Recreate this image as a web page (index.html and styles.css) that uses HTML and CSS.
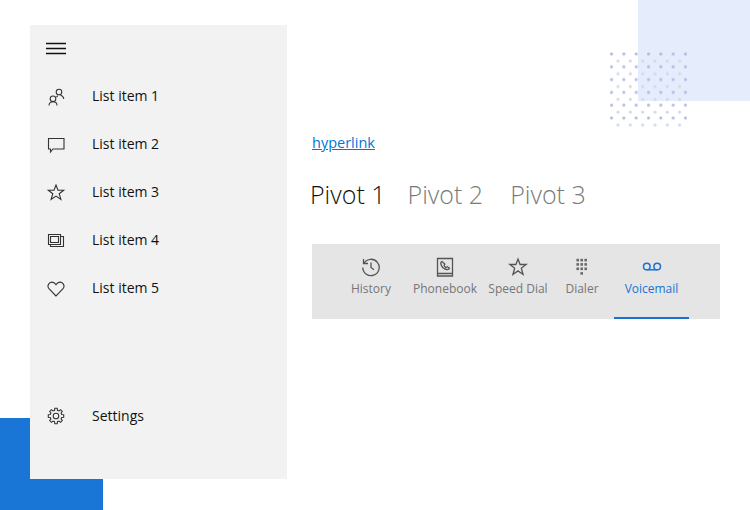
FILE: index.html
```html
<!DOCTYPE html>
<html>
<head>
    <meta charset="utf-8">
    <title>Navigation</title>
    <link rel="stylesheet" href="styles.css">
</head>
<body>
<div class="page">
    <!-- background decoration -->
    <div class="deco-blue"></div>
    <div class="deco-light"></div>
    <div class="deco-dots"></div>

    <div class="sidebar">
        <div class="menu-row">
            <svg class="icon" viewBox="0 0 20 20"><path d="M0 4.500h20M0 9.500h20M0 14.500h20"/></svg>
        </div>
        <div class="nav-row">
            <svg class="icon" viewBox="0 0 20 20">
                <circle cx="13" cy="6" r="2.800"/><circle cx="7" cy="12.800" r="2.800"/>
                <path d="M3 19.500c0-2.500 1.800-3.800 4-3.800s4 1.300 4 3.800M11.800 9.800c-.5.300-1 .8-1.300 1.400M14.500 9.200c1.500.4 3 1.800 3.300 3.600"/>
            </svg>
            <span>List item 1</span>
        </div>
        <div class="nav-row">
            <svg class="icon" viewBox="0 0 20 20"><path d="M2.500 4.500h15.500v10.500h-11l-2.500 3v-3h-2z"/></svg>
            <span>List item 2</span>
        </div>
        <div class="nav-row">
            <svg class="icon" viewBox="0 0 20 20"><path d="M10 3l2 5.200h5.700l-4.500 3.500 1.700 5.800-4.900-3.400-4.900 3.400 1.700-5.800-4.500-3.500h5.700z"/></svg>
            <span>List item 3</span>
        </div>
        <div class="nav-row">
            <svg class="icon" viewBox="0 0 20 20"><path d="M2.500 4.500h12v10h-12zM4.500 6.500h8v6h-8zM15 6.500h2.500v10h-13v-2"/></svg>
            <span>List item 4</span>
        </div>
        <div class="nav-row">
            <svg class="icon" viewBox="0 0 20 20"><path d="M10 18l-6.800-7c-3.200-3.700 1-8.500 4.800-6.200.8.500 1.500 1.200 2 2 .5-.8 1.200-1.500 2-2 3.800-2.300 8 2.500 4.800 6.200z"/></svg>
            <span>List item 5</span>
        </div>
        <div class="nav-row nav-bottom">
            <svg class="icon" viewBox="0 0 20 20">
                <path d="M15.720 8.570L17.700 8.780V11.220L15.720 11.430 15.060 13.030 16.310 14.580 14.580 16.310 13.030 15.060 11.430 15.720 11.220 17.700H8.780L8.570 15.720 6.970 15.060 5.420 16.310 3.690 14.580 4.940 13.030 4.280 11.430 2.300 11.220V8.780L4.280 8.570 4.940 6.970 3.690 5.420 5.420 3.690 6.970 4.940 8.570 4.280 8.780 2.300H11.220L11.430 4.280 13.030 4.940 14.580 3.690 16.310 5.420 15.060 6.970z"/>
                <circle cx="10" cy="10" r="2.800"/>
            </svg>
            <span>Settings</span>
        </div>
    </div>

    <div class="main">
        <a class="link" href="#">hyperlink</a>
        <div class="pivots">
            <span class="pivot pivot-active">Pivot 1</span>
            <span class="pivot">Pivot 2</span>
            <span class="pivot">Pivot 3</span>
        </div>
        <div class="tabbar">
            <div class="tab">
                <svg class="tab-icon" viewBox="0 0 20 20"><path d="M3 6.200A8.200 8.200 0 1 1 1.800 10.500M2.500 2v4.500h4.500M10 5.500v5l3 2.200"/></svg>
                <span>History</span>
            </div>
            <div class="tab">
                <svg class="tab-icon" viewBox="0 0 20 20">
                    <path d="M2.500 1.500h15v17.500h-15zM3 16.500h14"/>
                    <path d="M7 4.500c-1.300.5-1.500 1.500-1 3 .8 2.400 2.800 4.400 5.500 5 1.500.3 2.500 0 3-1.200l-2.200-1.500-1.300.8c-1-.5-1.600-1.200-2-2.300l.9-1.200z"/>
                </svg>
                <span>Phonebook</span>
            </div>
            <div class="tab">
                <svg class="tab-icon" viewBox="0 0 20 20"><path d="M10 2l2.100 5.500h6l-4.800 3.700 1.800 6.300-5.100-3.600-5.100 3.600 1.800-6.300-4.800-3.700h6z"/></svg>
                <span>Speed Dial</span>
            </div>
            <div class="tab">
                <svg class="tab-icon tab-dots" viewBox="0 0 20 20">
                    <rect x="4.400" y="1.800" width="2.600" height="2.600"/><rect x="8.400" y="1.800" width="2.600" height="2.600"/><rect x="12.400" y="1.800" width="2.600" height="2.600"/>
                    <rect x="4.400" y="6.100" width="2.600" height="2.600"/><rect x="8.400" y="6.100" width="2.600" height="2.600"/><rect x="12.400" y="6.100" width="2.600" height="2.600"/>
                    <rect x="4.400" y="10.500" width="2.600" height="2.600"/><rect x="8.400" y="10.500" width="2.600" height="2.600"/><rect x="12.400" y="10.500" width="2.600" height="2.600"/>
                    <rect x="8.400" y="15.100" width="2.600" height="2.600"/>
                </svg>
                <span>Dialer</span>
            </div>
            <div class="tab tab-active">
                <svg class="tab-icon" viewBox="0 0 20 20"><circle cx="4.800" cy="9.500" r="3.300"/><circle cx="15.200" cy="9.500" r="3.300"/><path d="M4.800 12.800h10.400"/></svg>
                <span>Voicemail</span>
            </div>
        </div>
    </div>
</div>
</body>
</html>
```
FILE: styles.css
```css
html, body {
    margin: 0;
    padding: 0;
    background: #ffffff;
}

.page {
    position: relative;
    display: flex;
    width: 750px;
    height: 510px;
    overflow: hidden;
    font-family: "Open Sans", "Noto Sans", sans-serif;
}

/* decoration */
.deco-blue {
    position: absolute;
    left: 0;
    top: 418px;
    width: 103px;
    height: 92px;
    background: #1976d6;
}

.deco-light {
    position: absolute;
    left: 638px;
    top: 0;
    width: 112px;
    height: 101px;
    background: #e5ecfb;
}

.deco-dots {
    position: absolute;
    left: 610px;
    top: 52px;
    width: 77px;
    height: 75px;
    background-image:
        radial-gradient(circle at 1.5px 2px, #b4bde2 1px, transparent 2px),
        radial-gradient(circle at 8px 9px, #d3d8ee 1px, transparent 2px);
    background-size: 12.33px 12.8px;
}

/* sidebar */
.sidebar {
    position: relative;
    display: flex;
    flex-direction: column;
    width: 257px;
    height: 454px;
    margin: 25px 0 0 30px;
    padding-bottom: 39px;
    box-sizing: border-box;
    background: #f2f2f2;
    color: #111111;
    font-size: 14px;
}

.menu-row {
    display: flex;
    align-items: center;
    height: 44px;
    margin-bottom: 1px;
    padding: 2px 0 0 16px;
}

.menu-row .icon {
    stroke: #111111;
    stroke-width: 1.3;
}

.nav-row {
    display: flex;
    align-items: center;
    gap: 26px;
    height: 48px;
    padding-left: 16px;
}

.nav-row span {
    padding-bottom: 2px;
}

.nav-bottom {
    margin-top: auto;
}

.icon {
    display: block;
    flex: none;
    width: 20px;
    height: 20px;
    fill: none;
    stroke: #333333;
    stroke-width: 1.1;
}

/* right side */
.main {
    position: relative;
    display: flex;
    flex-direction: column;
    align-items: flex-start;
    width: 408px;
    margin-left: 25px;
    padding-top: 132px;
}

.link {
    color: #0078d7;
    font-size: 14.5px;
    line-height: 22px;
}

.pivots {
    display: flex;
    gap: 27px;
    margin: 23px 0 0 -2px;
    font-size: 25px;
    font-weight: 300;
    line-height: 34px;
    color: #7a7a7a;
}

.pivot-active {
    margin-right: -5px;
    color: #111111;
}

.tabbar {
    display: grid;
    grid-template-columns: 66px 82px 64px 64px 75px;
    box-sizing: border-box;
    width: 408px;
    height: 75px;
    margin-top: 33px;
    padding-left: 26px;
    background: #e5e5e5;
    color: #767676;
    font-size: 12px;
}

.tab {
    display: flex;
    flex-direction: column;
    align-items: center;
    padding-top: 13px;
    box-sizing: border-box;
    white-space: nowrap;
}

.tab span {
    margin-top: 3px;
    line-height: 17px;
}

.tab-icon {
    display: block;
    width: 20px;
    height: 20px;
    fill: none;
    stroke: #555555;
    stroke-width: 1.3;
}

.tab-dots {
    fill: #6a6a6a;
    stroke: none;
}

.tab-active {
    color: #1a73d4;
    border-bottom: 2px solid #1a73d4;
}

.tab-active .tab-icon {
    stroke: #1a73d4;
    stroke-width: 1.5;
}
```
